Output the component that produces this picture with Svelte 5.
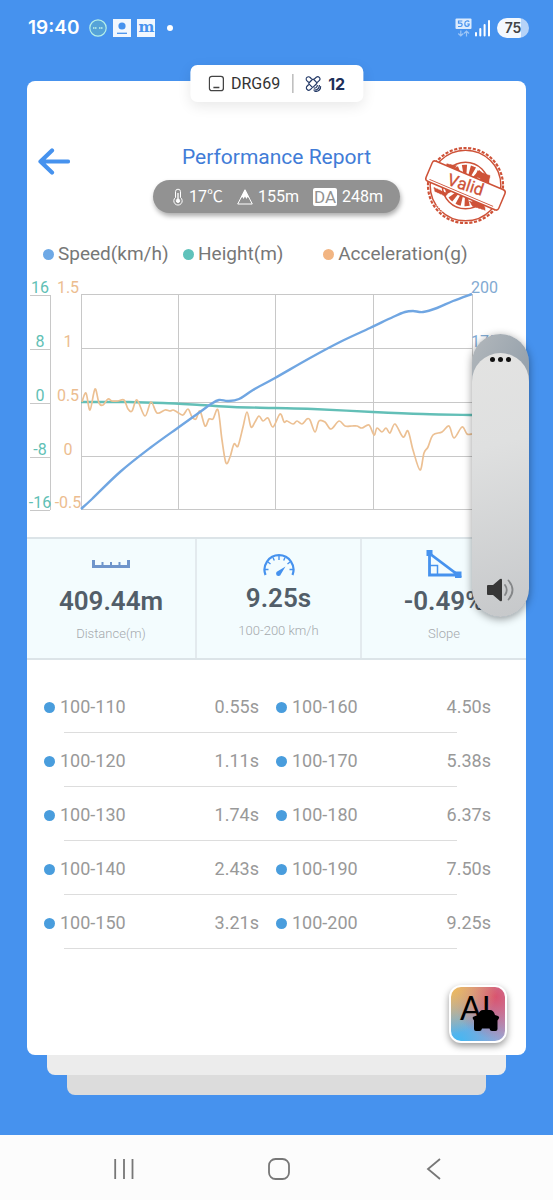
<script>
  const speed = [[0,215],[11,205],[39,178],[69,154],[98,133],[119,118],[130,110],[138,106],[147,107],[158,105],[172,96],[194,84],[229,64],[259,48],[289,34],[312,23],[324,18],[332,17],[342,18],[356,14],[372,7],[391,0]];
  const height = [[0,108],[47,108],[82,109],[119,111],[152,113],[194,114],[232,115],[292,118],[342,120],[391,121]];
  const accel = [[1,108],[5,99],[9,116],[14,95],[18,109],[22,111],[27,105],[31,107],[37,107],[43,106],[47,115],[51,117],[56,106],[64,122],[70,108],[76,119],[84,116],[89,117],[92,116],[96,118],[102,121],[107,115],[111,123],[115,125],[119,117],[124,132],[128,125],[132,125],[137,116],[141,146],[145,169],[149,163],[153,150],[157,152],[162,133],[166,118],[170,133],[174,128],[178,122],[182,127],[187,124],[192,133],[199,120],[203,128],[206,127],[212,130],[216,127],[221,130],[226,125],[229,126],[234,138],[238,127],[244,128],[250,135],[258,127],[264,132],[271,132],[276,132],[281,134],[288,131],[293,141],[296,134],[301,138],[305,134],[309,139],[314,130],[322,143],[327,137],[332,156],[339,176],[343,159],[347,153],[352,141],[361,138],[368,132],[373,144],[381,133],[386,140],[391,140]];

  function curve(pts) {
    let d = `M${pts[0][0]} ${pts[0][1]}`;
    for (let i = 0; i < pts.length - 1; i++) {
      const a = pts[Math.max(0, i - 1)], b = pts[i], c = pts[i + 1], e = pts[Math.min(pts.length - 1, i + 2)];
      d += `C${b[0] + (c[0] - a[0]) / 6} ${b[1] + (c[1] - a[1]) / 6} ${c[0] - (e[0] - b[0]) / 6} ${c[1] - (e[1] - b[1]) / 6} ${c[0]} ${c[1]}`;
    }
    return d;
  }

  const rows = [0, 54, 108, 162, 215];
  const cols = [0, 97, 194, 292, 391];
  const heightTicks = ['16', '8', '0', '-8', '-16'];
  const accelTicks = ['1.5', '1', '0.5', '0', '-0.5'];
  const speedTicks = ['200', '175'];

  const legend = [
    { name: 'Speed(km/h)', color: '#6ea9e6' },
    { name: 'Height(m)', color: '#5fc2bb' },
    { name: 'Acceleration(g)', color: '#f2b582' }
  ];

  const splits = [
    ['100-110', '0.55s', '100-160', '4.50s'],
    ['100-120', '1.11s', '100-170', '5.38s'],
    ['100-130', '1.74s', '100-180', '6.37s'],
    ['100-140', '2.43s', '100-190', '7.50s'],
    ['100-150', '3.21s', '100-200', '9.25s']
  ];
  let volume = $state(93);
</script>

<div class="screen">
  <header class="status">
    <div class="group">
      <span class="clock">19:40</span>
      <svg width="18" height="18" viewBox="0 0 18 18"><circle cx="9" cy="9" r="8.2" fill="#55a3d8" stroke="#b5f0e8" stroke-width="1.2"/><path d="M4 9h4M10 9h4" stroke="#a5dfe5" stroke-width="1.8" stroke-dasharray="1.5 .5"/></svg>
      <svg width="18" height="18" viewBox="0 0 18 18"><path fill="#f1f7fe" d="M0 0h18v18H0z"/><circle cx="9" cy="7" r="3.6" fill="#4692ee"/><path d="M4 14.3h10" stroke="#4692ee" stroke-width="1.3"/></svg>
      <span class="m">m</span>
      <span class="more"></span>
    </div>
    <div class="group">
      <svg width="36" height="20" viewBox="0 0 36 20">
        <rect x=".5" y=".5" width="16" height="10.500" rx="1" fill="#dcebfd"/>
        <path d="M7.300 3H3.500v2.200h2c2.200 0 2.200 3.300 0 3.300H3M14.200 3.700c-1-1.300-4.400-1.300-4.400 2 0 3.700 4.400 3.400 4.400.3h-2" fill="none" stroke="#4692ee" stroke-width="1.200"/>
        <path d="M5.800 12.500v5.500M3.300 15.500l2.500 2.500 2.500-2.500M11.500 18.500V13M9 15.500l2.500-2.500 2.500 2.500" fill="none" stroke="#9cc5f6" stroke-width="1.200"/>
        <path d="M21 15v2.500M25.300 11v6.500M29.600 7v10.500M34 3v14.500" stroke="#fff" stroke-width="2" stroke-linecap="round"/>
      </svg>
      <span class="battery">75</span>
    </div>
  </header>

  <main>
    <section class="card">
      <div class="tab">
        <svg width="16" height="17" viewBox="0 0 16 17"><rect x="1" y="1.300" width="14" height="14.400" rx="2.500" fill="none" stroke="#444" stroke-width="1.300"/><path d="M5 12.500h6" stroke="#444" stroke-width="1.300"/></svg>
        <span>DRG69</span>
        <i></i>
        <svg width="16" height="16" viewBox="0 0 16 16" fill="none" stroke="#263b68" stroke-width="1.200">
          <rect x="4.500" y="4" width="6" height="6.500" rx="1" transform="rotate(45 7.500 7.200)"/>
          <path d="M6.300 3.200 4.800 1.500a2 2 0 0 0-3.400 3.100l2 1.900M8.700 3.200l2.200-1.900a2.200 2.200 0 0 1 3.100 3.100l-2.300 2.300M3.400 8.500l-2 2c-1.400 2.200 1.200 4.700 3.300 3.300l2-2"/>
          <path d="M8.500 12c2 .4 3.500-1 3.500-3M8 14c3.500.6 6.200-1.800 6-5M9 15.500c3.800.3 6.500-2 6.500-5.500"/>
        </svg>
        <b>12</b>
      </div>

      <div class="head">
        <button class="back" aria-label="Back">
          <svg width="32" height="27" viewBox="0 0 32 27"><path d="M14 2.500 2.500 13.500 14 24.500M3 13.500h27" fill="none" stroke="#4692ee" stroke-width="4.200" stroke-linecap="round" stroke-linejoin="round"/></svg>
        </button>
        <div class="center">
          <h1>Performance Report</h1>
          <div class="weather">
            <svg width="12" height="18" viewBox="0 0 12 18" fill="none" stroke="#fff"><path d="M3.500 9.500V3.700a2.500 2.500 0 0 1 5 0v5.800a4.200 4.200 0 1 1-5 0z"/><path d="M6 5v7" stroke-width="1.300"/><circle cx="6" cy="12.800" r="1.700" fill="#fff"/></svg>
            <span>17℃</span>
            <svg class="peak" width="16" height="16" viewBox="0 0 16 16"><path d="M8 1 15.300 15H.7z" fill="none" stroke="#fff"/><path d="M8 0 12.500 9 10.500 8 9.500 10 8 7.500 6.500 10 5.500 8 3.500 9z" fill="#fff"/></svg>
            <span>155m</span>
            <em>DA</em>
            <span>248m</span>
          </div>
        </div>
        <svg class="stamp" width="81" height="79" viewBox="0 0 82 80" fill="none" stroke="#ce5238">
          <circle cx="41" cy="40" r="38" stroke-width="2.200" stroke-dasharray="3.200 1.575"/>
          <circle cx="41" cy="40" r="35.800" stroke-width="1.500"/>
          <circle cx="41" cy="40" r="23.500" stroke-width="1.500"/>
          <circle cx="41" cy="40" r="16" stroke-width="10" stroke-dasharray="4.200 3"/>
          <path d="M22 18l10 2-3 4-8-3zM53 25l13 5-2 8-12-7zM9 42l14 6-2 3-11-5zM45 56l15 3 1 6-13-4z" fill="#ce5238" stroke-width=".6" stroke-dasharray="2 1"/>
          <path d="M56 10l10 7M12 60l6 7M58 13l6 5" stroke="#fff" stroke-width="1.200" stroke-dasharray="1 1.500"/>
          <g transform="rotate(23 41 40)">
            <rect x="1" y="29" width="80" height="22" rx="3" fill="#fff" stroke-width="1.500"/>
            <path d="M5 48.500h70" stroke-width="1"/>
          </g>
          <text x="41" y="45" transform="rotate(18 41 40)" text-anchor="middle" fill="#ce5238" stroke="#ce5238" stroke-width=".3" font-size="17">Valid</text>
        </svg>
      </div>

      <ul class="legend">
        {#each legend as l}
          <li><span class="dot" style="background:{l.color}"></span>{l.name}</li>
        {/each}
      </ul>

      <svg class="chart" viewBox="0 0 499 246" role="img" aria-label="Speed, height and acceleration">
        <g transform="translate(54 19)" fill="none">
          <g stroke="#c8c8c8">
            {#each rows as y}<path d="M0 {y + 0.5}H391M-51 {y + 1.5}H-31"/>{/each}
            {#each cols as x}<path d="M{x + 0.5} 0V215"/>{/each}
            <path d="M-30.500 1V216"/>
          </g>
          <path d={curve(height)} stroke="#63bfb7" stroke-width="2.400"/>
          <path d={curve(accel)} stroke="#ecc093" stroke-width="1.700"/>
          <path d={curve(speed)} stroke="#70a6e2" stroke-width="2.400"/>
        </g>
        <g transform="translate(54 19)" text-anchor="middle" font-size="16">
          {#each rows as y, i}
            <text x="-41" y={y - 1} fill="#61bfb5">{heightTicks[i]}</text>
            <text x="-13" y={y - 1} fill="#ecbd90">{accelTicks[i]}</text>
          {/each}
          {#each speedTicks as t, i}
            <text x="390" y={rows[i] - 1} text-anchor="start" fill="#82aad2">{t}</text>
          {/each}
        </g>
      </svg>

      <div class="stats">
        <div>
          <svg width="38" height="28" viewBox="0 0 38 28"><path d="M1.500 10v6.500h35V10" fill="none" stroke="#6f95cb" stroke-width="3"/><path d="M10.500 12v4M19 12v4M27.500 12v4" stroke="#6f95cb" stroke-width="2"/></svg>
          <strong>409.44m</strong><small>Distance(m)</small>
        </div>
        <div class="time">
          <svg width="32" height="24" viewBox="0 0 32 24" fill="none" stroke="#4692ee"><path d="M2.500 22a14.500 14.500 0 1 1 27 0" stroke-width="2.200"/><path d="M16 3v4M10 4.500l1.300 3M22 4.500l-1.300 3M5 9l2.500 2M27 9l-2.500 2M2 16.500h3.500M30 16.500h-3.500" stroke-width="1.400"/><path d="M22.500 13.500 18 21a2.500 2.500 0 1 1-3-3z" fill="#4692ee" stroke="none"/></svg>
          <strong>9.25s</strong><small>100-200 km/h</small>
        </div>
        <div>
          <svg width="36" height="28" viewBox="0 0 36 28" fill="none" stroke="#4692ee"><path d="M3.500 3.500v21.500H32z" stroke-width="2.800"/><path d="M4 15.500h7.500V25" stroke-width="1.500"/><path d="M.5 0h6v6h-6zM29 21.500h6.500V28H29z" fill="#4692ee" stroke="none"/></svg>
          <strong>-0.49%</strong><small>Slope</small>
        </div>
      </div>

      <table>
        <tbody>
          {#each splits as s}
            <tr>
              <th scope="row"><span class="dot"></span>{s[0]}</th><td>{s[1]}</td>
              <th><span class="dot"></span>{s[2]}</th><td>{s[3]}</td>
            </tr>
          {/each}
        </tbody>
      </table>

      <button class="ai" aria-label="AI assistant">
        <svg width="54" height="54" viewBox="0 0 54 54">
          <text x="9" y="33" font-size="32" font-family="Lato">AI</text>
          <path d="M27 28q1.500-5 5-5h7q3.500 0 5 5l3 1q2 1 .5 3l-1 1.500V42q0 2-2 2h-3.500q-2 0-2.500-2.500h-7.500q-.5 2.500-2.500 2.500H25q-2 0-2-2v-8.500L22 32q-1-2 1-2.500z"/>
        </svg>
      </button>
    </section>
    <div class="layer"></div>
    <div class="layer deep"></div>
  </main>

  <aside class="volume">
    <div class="fill">
      <button class="dots" aria-label="Sound settings"><i></i><i></i><i></i></button>
      <input type="range" min="0" max="100" bind:value={volume} aria-label="Volume" />
      <svg width="30" height="24" viewBox="0 0 30 24"><path d="M1 8q0-1 1-1h5l7-6q2-1 2 1v20q0 2-2 1l-7-6H2q-1 0-1-1z" fill="#373737"/><path d="M19 7q3.500 5 0 10M22.500 2.500q8 9.500 0 19" fill="none" stroke="#858789" stroke-width="1.800" stroke-linecap="round"/></svg>
    </div>
  </aside>

  <nav>
    <button aria-label="Recent apps"><svg width="22" height="22" viewBox="0 0 22 22"><path d="M2.200 1v20M11 1v20M19.500 1v20" stroke="#777" stroke-width="1.800"/></svg></button>
    <button aria-label="Home"><svg width="22" height="22" viewBox="0 0 22 22"><rect x="1" y="1" width="20" height="20" rx="6.500" fill="none" stroke="#777" stroke-width="1.800"/></svg></button>
    <button aria-label="Back"><svg width="22" height="22" viewBox="0 0 22 22"><path d="M17 1 5 11l12 10" fill="none" stroke="#777" stroke-width="1.800"/></svg></button>
  </nav>
</div>

<style>
  :global(body) { margin: 0; }
  * { box-sizing: border-box; }
  .screen { position: relative; display: flex; flex-direction: column; min-height: 100vh; background: #4692ee; font-family: Roboto, "Noto Sans CJK SC", sans-serif; overflow: hidden; }
  button { border: 0; padding: 0; background: none; font: inherit; cursor: pointer; }
  svg { display: block; flex: none; }
  .status { display: flex; justify-content: space-between; align-items: center; height: 55px; padding: 0 24px 0 28px; color: #fff; }
  .group { display: flex; align-items: center; gap: 6px; }
  .clock { font: 600 19px/24px Inter, sans-serif; margin-right: 4px; }
  .m { width: 18px; height: 18px; background: #f1f7fe; color: #4692ee; font: bold 15px/16px "DejaVu Serif", serif; text-align: center; }
  .more { width: 6px; height: 6px; border-radius: 50%; background: #fff; margin-left: 6px; }
  .battery { width: 32px; height: 20px; border-radius: 10px; background: linear-gradient(90deg, #f3f8fe 75%, #b5d3f8 75%); color: #424447; font: 600 14px/20px Inter, sans-serif; text-align: center; }
  main { padding: 26px 27px 40px; }
  .card { position: relative; display: flex; flex-direction: column; padding: 64px 0 12px; border-radius: 8px; background: #fff; }
  .tab { position: absolute; top: -16px; left: 50%; transform: translateX(-50%); display: flex; align-items: center; gap: 7px; height: 37px; padding: 0 18px; border-radius: 7px; background: #fff; box-shadow: 0 4px 14px #00000018; color: #333; font-size: 16px; }
  .tab i { width: 1px; height: 19px; margin: 0 5px; background: #999; }
  .tab b { color: #1d2f59; font: 700 16px/20px Inter, sans-serif; }
  .head { display: grid; grid-template-columns: 90px 1fr 90px; align-items: start; padding: 0 11px; }
  .back { width: 32px; margin-top: 3px; }
  .center { display: flex; flex-direction: column; align-items: center; gap: 11px; }
  h1 { margin: 0; font-size: 21px; line-height: 24px; font-weight: 400; color: #417cd7; white-space: nowrap; }
  .weather { display: flex; align-items: center; gap: 5px; height: 33px; padding: 0 17px 0 19px; border-radius: 17px; background: #929292; color: #fff; font-size: 16px; line-height: 20px; box-shadow: 1px 3px 5px #0005; white-space: nowrap; }
  .weather .peak { margin-left: 9px; }
  .weather em { margin-left: 9px; width: 24px; border-radius: 2px; background: #fff; color: #929292; font-size: 17px; font-style: normal; line-height: 18px; text-align: center; }
  .stamp { overflow: visible; margin: 1px 0; }
  .legend { display: grid; grid-template-columns: repeat(3, 29%); margin: 16px 0 0; padding: 0 0 0 16px; list-style: none; color: #777; font-size: 19px; line-height: 24px; }
  .legend li { display: flex; align-items: center; gap: 4px; white-space: nowrap; }
  .dot { display: inline-block; width: 11px; height: 11px; border-radius: 50%; background: #499ddd; flex: none; }
  .chart { width: 100%; height: auto; margin: 9px 0 16px; overflow: visible; }
  .stats { display: grid; grid-template-columns: 170fr 165fr 164fr; border: solid #dce4e8; border-width: 2px 0; background: #f3fcfe; }
  .stats > div { display: flex; flex-direction: column; align-items: center; padding: 11px 0 15px; border-right: 2px solid #e3eaee; }
  .stats > div:last-child { border-right: 0; }
  .stats strong { margin-top: 8px; color: #525e69; font-size: 26px; line-height: 30px; font-weight: 600; }
  .stats small { margin-top: 9px; color: #a5a9ad; font-size: 13px; line-height: 18px; font-weight: 300; }
  .stats .time { padding-top: 14px; }
  .stats .time strong { margin-top: 6px; }
  table { margin: 19px 35px 0 0; border-collapse: collapse; color: #999; font-size: 18px; }
  tr { height: 54px; background: linear-gradient(#ddd, #ddd) no-repeat 37px 100% / calc(100% - 71px) 1px; }
  th { padding: 0 0 0 17px; font-weight: 400; text-align: left; }
  th .dot { margin-right: 5px; }
  td { padding: 0; text-align: right; }
  .ai { width: 58px; height: 58px; margin: 36px 19px 0 auto; border: 2px solid #fff; border-radius: 12px; background: radial-gradient(circle at 0 0, #f5bd4f, #f5bd4f00 60%), radial-gradient(circle at 80% 20%, #d9536f, #d9536f00 65%), radial-gradient(circle at 15% 100%, #3fb9f5, #3fb9f500 75%), #b79bc4; background-origin: border-box; box-shadow: 0 3px 7px #0006; overflow: hidden; }
  .layer { height: 20px; margin: 0 20px; border-radius: 0 0 8px 8px; background: #ececec; }
  .layer.deep { margin: 0 40px; background: #dcdcdc; }
  .volume { position: absolute; top: 334px; right: 24px; width: 57px; height: 283px; padding-top: 19px; border-radius: 29px; background: linear-gradient(120deg, #b3b8bc, #98a3ad 60px); box-shadow: 0 2px 8px #0006; overflow: hidden; }
  .fill { display: flex; flex-direction: column; align-items: center; height: 100%; padding: 4px 0 15px; border-radius: 29px; background: linear-gradient(165deg, #e3e3e2, #dfe0e0 35%, #c6c8ca); }
  .dots { display: flex; gap: 3px; }
  .dots i { width: 5px; height: 5px; border-radius: 50%; background: #111; }
  input { flex: 1; width: 40px; min-height: 0; margin: 0; appearance: none; background: transparent; writing-mode: vertical-lr; direction: rtl; }
  input::-webkit-slider-thumb { appearance: none; width: 40px; height: 8px; background: transparent; }
  nav { display: grid; grid-template-columns: repeat(3, 1fr); height: 65px; margin-top: auto; padding: 3px 42px 0 47px; background: #fcfcfc; }
  nav button { display: grid; place-items: center; }
</style>
